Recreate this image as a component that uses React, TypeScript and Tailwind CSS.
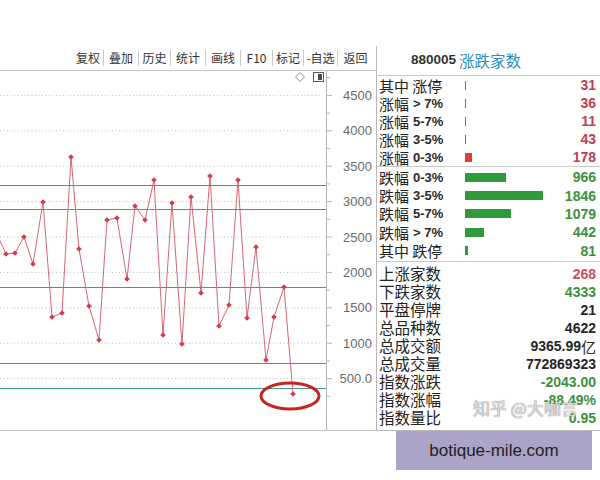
import React from 'react';

// 涨跌家数 index chart with the breadth table on the right
const toolbar: { t: string; w: string }[] = [
  { t: '复权', w: 'w-[30px]' },
  { t: '叠加', w: 'w-[35px]' },
  { t: '历史', w: 'w-[32px]' },
  { t: '统计', w: 'w-[35px]' },
  { t: '画线', w: 'w-[35px]' },
  { t: 'F10', w: 'w-[32px]' },
  { t: '标记', w: 'w-[31px]' },
  { t: '-自选', w: 'w-[34px]' },
  { t: '返回', w: 'w-[36px]' },
];

const points: [number, number][] = [
  [-4, 232], [6, 254], [15, 253], [24, 237], [33, 264], [43, 202], [52, 317], [62, 313],
  [71, 157], [79, 249], [89, 306], [99, 340], [107, 220], [117, 218], [127, 279], [135, 206],
  [145, 220], [154, 180], [163, 335], [172, 203], [182, 344], [191, 197], [201, 293], [210, 176],
  [219, 326], [229, 305], [238, 180], [247, 318], [256, 247], [266, 360], [274, 317], [284, 287],
  [293, 394],
];

const toY = (v: number) => 414 - v * 0.0708;
const levels = [4500, 4000, 3500, 3000, 2500, 2000, 1500, 1000, 500];
const bands = [185, 209, 287, 363, 388];

type Row = { label: string; tail?: string; value: number };

const upRows: Row[] = [
  { label: '其中 涨停', value: 31 },
  { label: '涨幅', tail: '> 7%', value: 36 },
  { label: '涨幅', tail: '5-7%', value: 11 },
  { label: '涨幅', tail: '3-5%', value: 43 },
  { label: '涨幅', tail: '0-3%', value: 178 },
];

const downRows: Row[] = [
  { label: '跌幅', tail: '0-3%', value: 966 },
  { label: '跌幅', tail: '3-5%', value: 1846 },
  { label: '跌幅', tail: '5-7%', value: 1079 },
  { label: '跌幅', tail: '> 7%', value: 442 },
  { label: '其中 跌停', value: 81 },
];

const stats: { label: string; value: string; unit?: string; color: string }[] = [
  { label: '上涨家数', value: '268', color: 'text-[#d04e5e]' },
  { label: '下跌家数', value: '4333', color: 'text-[#3d8f3d]' },
  { label: '平盘停牌', value: '21', color: 'text-[#262626]' },
  { label: '总品种数', value: '4622', color: 'text-[#262626]' },
  { label: '总成交额', value: '9365.99', unit: '亿', color: 'text-[#262626]' },
  { label: '总成交量', value: '772869323', color: 'text-[#262626]' },
  { label: '指数涨跌', value: '-2043.00', color: 'text-[#3d8f3d]' },
  { label: '指数涨幅', value: '-88.49%', color: 'text-[#3d8f3d]' },
  { label: '指数量比', value: '0.95', color: 'text-[#3d8f3d]' },
];

const barWidth = (v: number) => Math.max(1, Math.round(v * 0.0423));

function Label({ row }: { row: Row }) {
  return (
    <div className="w-[88px] pl-[2px] flex items-center whitespace-nowrap">
      <span className="text-[15px] leading-none text-[#222] font-['Noto_Sans_CJK_SC',sans-serif]">{row.label}</span>
      {row.tail && (
        <span className="ml-[4px] text-[13px] leading-none font-bold text-[#2a2a2a] font-['Liberation_Sans',sans-serif]">
          {row.tail}
        </span>
      )}
    </div>
  );
}

function Chart() {
  return (
    <svg width={376} height={360} viewBox="0 71 376 360" className="block">
      {/* dotted price levels */}
      {levels.map((v) => (
        <line key={v} x1={0} x2={322} y1={toY(v)} y2={toY(v)} stroke="#bdbdbd" strokeDasharray="1 2.5" />
      ))}
      {/* teal reference lines */}
      {bands.map((y) => (
        <line key={y} x1={0} x2={326} y1={y + 0.5} y2={y + 0.5} stroke="#3f9797" strokeWidth={1} />
      ))}
      {/* axis */}
      <line x1={326.5} x2={326.5} y1={71} y2={430} stroke="#b4b4b4" />
      {Array.from({ length: 19 }, (_, i) => 250 + i * 250).map((v) => (
        <line key={v} x1={327} x2={v % 500 === 0 ? 332 : 330} y1={toY(v)} y2={toY(v)} stroke="#b4b4b4" />
      ))}
      {levels.map((v) => (
        <text
          key={v}
          x={372}
          y={toY(v) + 4.5}
          textAnchor="end"
          fontSize={13}
          fill="#6a6a6a"
          fontFamily="'Liberation Sans', sans-serif"
        >
          {v === 500 ? '500.0' : v}
        </text>
      ))}
      {/* series */}
      <polyline
        points={points.map((p) => p.join(',')).join(' ')}
        fill="none"
        stroke="#d46676"
        strokeWidth={1}
      />
      {points.slice(1).map(([x, y], i) => (
        <path key={i} d={`M${x} ${y - 2.8}L${x + 2.8} ${y}L${x} ${y + 2.8}L${x - 2.8} ${y}Z`} fill="#d63a4c" />
      ))}
      <ellipse cx={290} cy={396} rx={29} ry={13} fill="none" stroke="#c8231d" strokeWidth={3} />
      {/* corner widgets */}
      <path d="M300 72.5L304.5 77L300 81.5L295.5 77Z" fill="none" stroke="#8a8a8a" />
      <rect x={313.5} y={72.5} width={10} height={9} fill="none" stroke="#5a5a5a" />
      <rect x={318} y={74} width={4} height={6} fill="#4a4a4a" />
      <line x1={0} x2={376} y1={430.5} y2={430.5} stroke="#c4c4c4" />
    </svg>
  );
}

export default function App() {
  return (
    <div className="relative w-[600px] h-[480px] bg-white overflow-hidden">
      <div className="pt-[46px] flex">
        {/* left: toolbar + chart */}
        <div className="w-[376px] flex flex-col">
          <div className="h-[25px] flex items-center justify-end pr-[3px] border-b border-[#c4c4c4] font-['Noto_Sans_CJK_SC',sans-serif] text-[12px] text-[#333]">
            {toolbar.map((b, i) => (
              <div
                key={b.t}
                className={`${b.w} text-center leading-[16px] ${i > 0 ? 'border-l border-[#c8c8c8]' : ''}`}
              >
                {b.t}
              </div>
            ))}
          </div>
          <Chart />
        </div>

        {/* right: breadth table */}
        <div className="flex-1 flex flex-col border-l border-[#b8b8b8] h-[385px] border-b">
          <div className="h-[30px] flex items-center pl-[34px] border-b border-[#c8c8c8] gap-[3px]">
            <span className="text-[13.5px] font-bold text-[#333] font-['Liberation_Sans',sans-serif]">880005</span>
            <span className="text-[15.5px] text-[#2b8cc4] font-['Noto_Sans_CJK_SC',sans-serif]">涨跌家数</span>
          </div>

          <div className="h-[91px] flex flex-col justify-center border-b border-[#c8c8c8]">
            {upRows.map((r, i) => (
              <div key={i} className="h-[18px] flex items-center">
                <Label row={r} />
                <div className="flex-1 flex items-center">
                  <div className="h-[9px] bg-[#e0403c]" style={{ width: r.value > 100 ? 7 : 1 }} />
                </div>
                <span className="pr-[4px] text-[14px] leading-none font-bold text-[#c23e4e] font-['Liberation_Sans',sans-serif]">
                  {r.value}
                </span>
              </div>
            ))}
          </div>

          <div className="h-[95px] flex flex-col justify-center border-b border-[#c8c8c8]">
            {downRows.map((r, i) => (
              <div key={i} className="h-[18.4px] flex items-center">
                <Label row={r} />
                <div className="flex-1 flex items-center">
                  <div className="h-[9px] bg-[#2f9a3a]" style={{ width: barWidth(r.value) }} />
                </div>
                <span className="pr-[4px] text-[14px] leading-none font-bold text-[#3d8f3d] font-['Liberation_Sans',sans-serif]">
                  {r.value}
                </span>
              </div>
            ))}
          </div>

          <div className="flex-1 flex flex-col justify-center">
            {stats.map((s) => (
              <div key={s.label} className="h-[18px] flex items-center justify-between">
                <span className="pl-[2px] text-[15.5px] leading-none text-[#222] font-['Noto_Sans_CJK_SC',sans-serif]">
                  {s.label}
                </span>
                <span className={`pr-[4px] flex items-center leading-none text-[14px] font-bold font-['Liberation_Sans',sans-serif] ${s.color}`}>
                  {s.value}
                  {s.unit && (
                    <span className="text-[15px] leading-none font-normal font-['Noto_Sans_CJK_SC',sans-serif]">{s.unit}</span>
                  )}
                </span>
              </div>
            ))}
          </div>
        </div>
      </div>

      {/* watermarks */}
      <div className="absolute left-[473px] top-[397px] text-[17px] leading-[22px] text-white/70 font-['Noto_Sans_CJK_SC',sans-serif] [text-shadow:0_0_1px_#8a8a8a,0_0_1px_#8a8a8a]">
        知乎 @大咖言
      </div>
      <div className="absolute left-[396px] top-[431px] w-[196px] h-[39px] bg-[#aba4c8] flex items-center justify-center text-[17px] text-[#1e1e1e] font-['Liberation_Sans',sans-serif]">
        botique-mile.com
      </div>
    </div>
  );
}
